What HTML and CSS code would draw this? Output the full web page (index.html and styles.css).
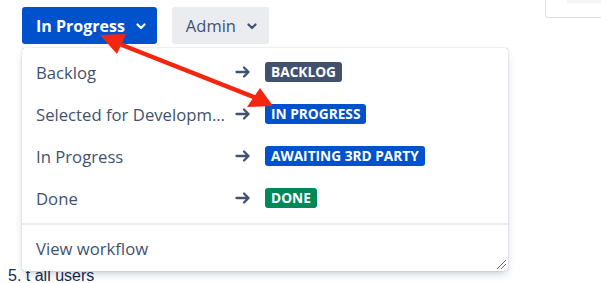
FILE: index.html
```html
<!DOCTYPE html>
<html>
<head>
  <title>Transition</title>
  <link rel="stylesheet" href="styles.css">
</head>
<body>
  <div class="page-header">
    <div class="toolbar">
      <button class="status-btn primary">In Progress
        <svg class="chevron" viewBox="0 0 12 12"><path d="M2.5 4.5 L6 8 L9.5 4.5" fill="none" stroke="currentColor" stroke-width="2.2" stroke-linecap="round" stroke-linejoin="round"/></svg>
      </button>
      <button class="status-btn">Admin
        <svg class="chevron" viewBox="0 0 12 12"><path d="M2.5 4.5 L6 8 L9.5 4.5" fill="none" stroke="currentColor" stroke-width="2.2" stroke-linecap="round" stroke-linejoin="round"/></svg>
      </button>
    </div>
    <div class="corner-box"><div class="corner-fill"></div></div>
  </div>

  <div class="page-body">
    <div class="list-line">5. t all users</div>
  </div>

  <div class="transition-menu">
    <div class="menu-group">
      <div class="menu-row">
        <span class="row-name">Backlog</span>
        <svg class="row-arrow" viewBox="0 0 16 16"><path d="M1.5 8 H13.5 M9 3.5 L13.5 8 L9 12.5" fill="none" stroke="currentColor" stroke-width="2.3" stroke-linecap="round" stroke-linejoin="round"/></svg>
        <span class="lozenge lozenge-grey">Backlog</span>
      </div>
      <div class="menu-row">
        <span class="row-name">Selected for Development</span>
        <svg class="row-arrow" viewBox="0 0 16 16"><path d="M1.5 8 H13.5 M9 3.5 L13.5 8 L9 12.5" fill="none" stroke="currentColor" stroke-width="2.3" stroke-linecap="round" stroke-linejoin="round"/></svg>
        <span class="lozenge lozenge-blue">In Progress</span>
      </div>
      <div class="menu-row">
        <span class="row-name">In Progress</span>
        <svg class="row-arrow" viewBox="0 0 16 16"><path d="M1.5 8 H13.5 M9 3.5 L13.5 8 L9 12.5" fill="none" stroke="currentColor" stroke-width="2.3" stroke-linecap="round" stroke-linejoin="round"/></svg>
        <span class="lozenge lozenge-blue">Awaiting 3rd party</span>
      </div>
      <div class="menu-row">
        <span class="row-name">Done</span>
        <svg class="row-arrow" viewBox="0 0 16 16"><path d="M1.5 8 H13.5 M9 3.5 L13.5 8 L9 12.5" fill="none" stroke="currentColor" stroke-width="2.3" stroke-linecap="round" stroke-linejoin="round"/></svg>
        <span class="lozenge lozenge-green">Done</span>
      </div>
    </div>
    <div class="menu-group">
      <div class="menu-row">
        <span class="row-name">View workflow</span>
      </div>
    </div>
    <svg class="resize-grip" viewBox="0 0 10 10"><path d="M1 10 L10 1 M5 10 L10 5" stroke="#6b6b6b" stroke-width="1"/></svg>
  </div>

  <!-- annotation arrow -->
  <svg class="annotation" width="601" height="283">
    <line x1="117" y1="43" x2="256" y2="98" stroke="#f5260f" stroke-width="4.5" />
    <polygon points="100,35 126,34 117,54" fill="#f5260f" />
    <polygon points="273,106 247,107 260,88" fill="#f5260f" />
  </svg>
</body>
</html>
```

FILE: styles.css
```css
body {
  margin: 0;
  font-family: "Open Sans", "Noto Sans", sans-serif;
  color: #172b4d;
  background: #fff;
  position: relative;
  height: 283px;
  overflow: hidden;
}
.page-header {
  display: flex;
  justify-content: space-between;
  align-items: flex-start;
}
.toolbar {
  display: flex;
  gap: 15px;
  padding: 7px 0 0 22px;
}
.status-btn {
  display: flex;
  align-items: center;
  height: 37px;
  padding: 0 11px 0 14px;
  border: none;
  border-radius: 3px;
  background: #ebecf0;
  color: #42526e;
  font-family: inherit;
  font-size: 16.5px;
  cursor: pointer;
}
.status-btn.primary {
  background: #0052cc;
  color: #fff;
  font-weight: 700;
  font-size: 16px;
  padding-right: 10px;
}
.chevron {
  width: 12px;
  height: 12px;
  margin-left: 10px;
}
.corner-box {
  width: 55px;
  height: 17px;
  border: 1px solid #dfe1e6;
  border-top: none;
  border-right: none;
  border-bottom-left-radius: 3px;
  display: flex;
  justify-content: flex-end;
}
.corner-fill {
  width: 34px;
  height: 3px;
  background: #f4f5f7;
}
.page-body {
  padding: 223px 0 0 8px;
}
.list-line {
  font-family: "Liberation Sans", Arial, sans-serif;
  font-size: 16px;
  line-height: 18px;
  color: #172b4d;
}
.transition-menu {
  position: absolute;
  top: 48px;
  left: 22px;
  width: 486px;
  background: #fff;
  border-radius: 3px;
  box-shadow: 0 4px 8px -2px rgba(9, 30, 66, 0.25), 0 0 1px rgba(9, 30, 66, 0.5);
}
.menu-group {
  padding: 3px 0 4px;
}
.menu-group + .menu-group {
  border-top: 2px solid #ebecf0;
  padding: 2px 0 2px;
}
.menu-row {
  display: flex;
  align-items: center;
  height: 42px;
  padding-left: 14px;
  font-size: 16.7px;
  color: #42526e;
}
.row-name {
  width: 193px;
  white-space: nowrap;
  overflow: hidden;
  text-overflow: ellipsis;
}
.row-arrow {
  width: 16px;
  height: 16px;
  margin-left: 6px;
  color: #42526e;
}
.lozenge {
  margin-left: 14px;
  height: 20px;
  line-height: 20px;
  padding: 0 6px;
  border-radius: 3px;
  color: #fff;
  font-size: 13.7px;
  font-weight: 700;
  text-transform: uppercase;
}
.lozenge-grey {
  background: #42526e;
}
.lozenge-blue {
  background: #0052cc;
}
.lozenge-green {
  background: #00875a;
}
.resize-grip {
  position: absolute;
  right: 2px;
  bottom: 2px;
  width: 10px;
  height: 10px;
}
.annotation {
  position: absolute;
  top: 0;
  left: 0;
  pointer-events: none;
}
```
